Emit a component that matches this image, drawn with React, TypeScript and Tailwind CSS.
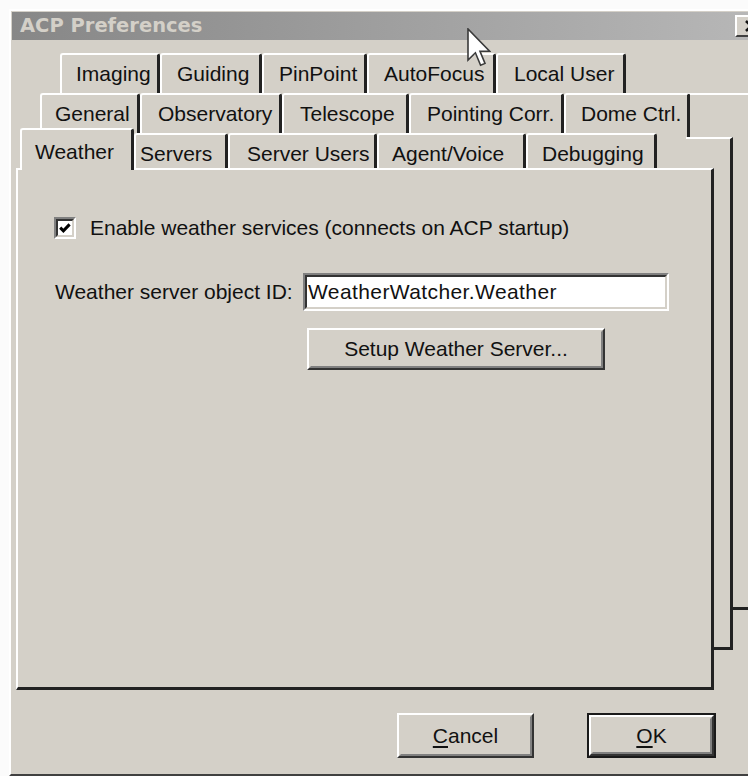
import clsx from "clsx";

type TabDef = { label: string; cls: string };

// three rows of property-sheet tabs, back row first
const rowBack: TabDef[] = [
  { label: "Imaging", cls: "w-[100px] pl-[14px]" },
  { label: "Guiding", cls: "w-[102px] pl-[15px]" },
  { label: "PinPoint", cls: "w-[105px] pl-[15px]" },
  { label: "AutoFocus", cls: "w-[129px] pl-[15px]" },
  { label: "Local User", cls: "w-[130px] pl-[16px]" },
];

const rowMiddle: TabDef[] = [
  { label: "General", cls: "w-[100px] pl-[13px]" },
  { label: "Observatory", cls: "w-[142px] pl-[16px]" },
  { label: "Telescope", cls: "w-[127px] pl-[16px]" },
  { label: "Pointing Corr.", cls: "w-[155px] pl-[16px]" },
  { label: "Dome Ctrl.", cls: "w-[126px] pl-[15px]" },
];

const rowFront: TabDef[] = [
  { label: "Servers", cls: "w-[94px] pl-[4px]" },
  { label: "Server Users", cls: "w-[149px] pl-[17px]" },
  { label: "Agent/Voice", cls: "w-[149px] pl-[13px]" },
  { label: "Debugging", cls: "w-[131px] pl-[14px]" },
];

const Tab = ({ tab, className }: { tab: TabDef; className?: string }) => (
  <div
    className={clsx(
      "flex h-full shrink-0 items-center whitespace-nowrap rounded-t-[3px] border-l-2 border-t-2 border-r-[3px] border-l-white border-t-white border-r-[#222] bg-[#d4d0c8]",
      tab.cls,
      className
    )}
  >
    {tab.label}
  </div>
);

const RaisedButton = ({ children, className, isDefault }: { children: React.ReactNode; className: string; isDefault?: boolean }) => (
  <div className={clsx("shrink-0", isDefault && "border-2 border-[#1a1a1a]", className)}>
    <div className="h-full w-full border-2 border-l-white border-t-white border-r-[#333] border-b-[#333]">
      <div className="flex h-full w-full items-center justify-center border-2 border-l-[#d4d0c8] border-t-[#d4d0c8] border-r-[#808080] border-b-[#808080]">
        {children}
      </div>
    </div>
  </div>
);

const Sunken = ({ children, className }: { children?: React.ReactNode; className: string }) => (
  <div className={clsx("shrink-0 border-2 border-l-[#808080] border-t-[#808080] border-r-white border-b-white", className)}>
    <div className="h-full w-full border-2 border-l-[#333] border-t-[#333] border-r-[#d4d0c8] border-b-[#d4d0c8] bg-white">
      {children}
    </div>
  </div>
);

export default function App() {
  return (
    <div className="relative h-[776px] w-[748px] overflow-hidden bg-[#fbfbfb] pl-[9px] pt-[9px] font-['Liberation_Sans',Arial,sans-serif] text-[21px] text-[#111]">
      <div className="flex h-[767px] w-[765px] flex-col border-2 border-l-white border-t-white border-r-[#404040] border-b-[#404040] bg-[#d4d0c8] p-px">
        {/* caption (inactive window) */}
        <div className="flex h-[28px] shrink-0 items-center bg-linear-to-r from-[#878787] to-[#b8b8b8] pl-[8px] pr-[4px]">
          <span className="font-['DejaVu_Sans',sans-serif] text-[19.5px] font-bold text-[#d4d0c8]">ACP Preferences</span>
          <div className="ml-auto h-[22px] w-[32px] border-2 border-l-white border-t-white border-r-[#404040] border-b-[#404040] bg-[#d4d0c8]">
            <svg viewBox="0 0 28 18" className="h-full w-full">
              <path d="M9 4 L19 14 M19 4 L9 14" stroke="#111" strokeWidth="2.6" />
            </svg>
          </div>
        </div>

        <div className="relative flex-1">
          {/* pages behind the front one */}
          <div className="absolute left-[675px] top-[53px] z-0 h-[517px] w-[100px] border-t-2 border-l-[3px] border-b-[3px] border-t-white border-l-[#222] border-b-[#222] bg-[#d4d0c8]" />
          <div className="absolute left-[674px] top-[97px] z-[1] h-[513px] w-[47px] border-t-2 border-r-[3px] border-b-[3px] border-t-white border-r-[#222] border-b-[#222] bg-[#d4d0c8]" />

          <div className="relative z-[2] ml-[48px] mt-[13px] flex h-[40px]">
            {rowBack.map((t) => (
              <Tab key={t.label} tab={t} />
            ))}
          </div>
          <div className="relative z-[2] ml-[28px] flex h-[40px]">
            {rowMiddle.map((t) => (
              <Tab key={t.label} tab={t} />
            ))}
          </div>
          <div className="relative z-[4] ml-[8px] flex h-[35px] items-end">
            <Tab tab={{ label: "Weather", cls: "w-[114px] pl-[13px] pt-[4px]" }} className="!h-[42px] -mb-[2px]" />
            {rowFront.map((t) => (
              <Tab key={t.label} tab={t} className="pt-[4px]" />
            ))}
          </div>

          {/* Weather page */}
          <div className="relative z-[3] ml-[4px] flex h-[522px] w-[698px] flex-col border-2 border-r-[3px] border-b-[3px] border-l-white border-t-white border-r-[#222] border-b-[#222] bg-[#d4d0c8] pl-[36px] pt-[47px]">
            <div className="flex h-[22px] items-center">
              <Sunken className="h-[22px] w-[22px]">
                <svg viewBox="0 0 14 14" className="h-full w-full">
                  <path d="M2.2 6.6 L5.4 9.8 L11.6 3.4" fill="none" stroke="#000" strokeWidth="3" />
                </svg>
              </Sunken>
              <span className="ml-[14px] whitespace-nowrap">Enable weather services (connects on ACP startup)</span>
            </div>

            <div className="mt-[34px] flex h-[38px] items-center">
              <span className="ml-px w-[248px] whitespace-nowrap">Weather server object ID:</span>
              <Sunken className="h-[38px] w-[366px]">
                <div className="flex h-full items-center pl-[1px] tracking-[0.4px]">WeatherWatcher.Weather</div>
              </Sunken>
            </div>

            <RaisedButton className="ml-[253px] mt-[17px] h-[42px] w-[298px]">Setup Weather Server...</RaisedButton>
          </div>

          <div className="mt-[23px] flex h-[45px]">
            <RaisedButton className="ml-[385px] h-[45px] w-[137px]">
              <span>
                <span className="underline underline-offset-[3px]">C</span>ancel
              </span>
            </RaisedButton>
            <RaisedButton isDefault className="ml-[53px] h-[45px] w-[129px]">
              <span>
                <span className="underline underline-offset-[3px]">O</span>K
              </span>
            </RaisedButton>
          </div>
        </div>
      </div>

      {/* mouse pointer over the caption */}
      <svg className="absolute left-[467px] top-[28px] z-10" width="24" height="40" viewBox="0 0 12 20">
        <path d="M0.5 0.5 L0.5 16 L4.2 12.4 L6.8 18.6 L9 17.7 L6.5 11.6 L11.3 11.6 Z" fill="#fff" stroke="#3a3a3a" strokeWidth="0.8" strokeLinejoin="miter" />
      </svg>
    </div>
  );
}
